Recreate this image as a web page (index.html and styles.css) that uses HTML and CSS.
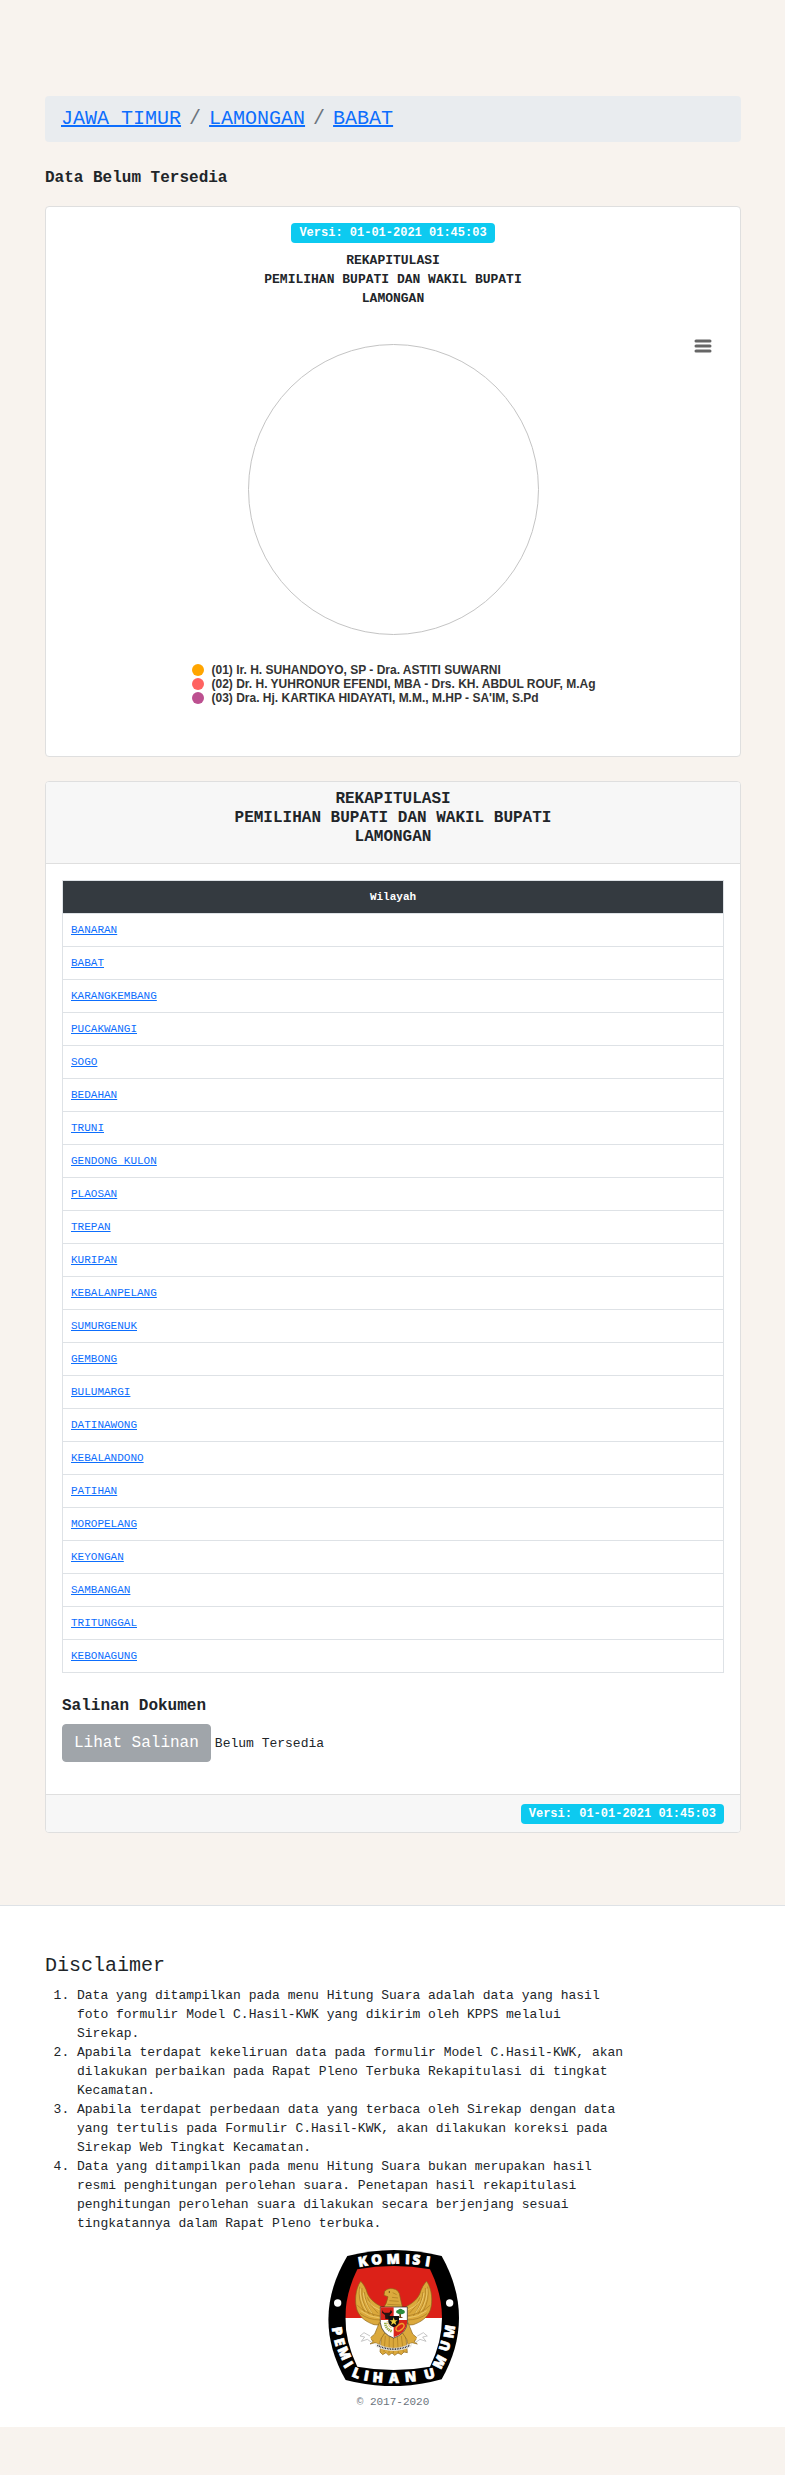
FILE: index.html
```html
<!DOCTYPE html>
<html lang="id">
<head>
<meta charset="utf-8">
<meta name="viewport" content="width=device-width, initial-scale=1">
<title>Rekapitulasi Lamongan</title>
<link rel="stylesheet" href="styles.css">
</head>
<body>
<main class="container">
  <nav aria-label="breadcrumb">
    <ol class="breadcrumb">
      <li><a href="#">JAWA TIMUR</a></li>
      <li><a href="#">LAMONGAN</a></li>
      <li><a href="#">BABAT</a></li>
    </ol>
  </nav>
  <h1 class="status">Data Belum Tersedia</h1>

  <section class="card card-chart">
    <span class="badge">Versi: 01-01-2021 01:45:03</span>
    <h2 class="chart-title">REKAPITULASI<br>PEMILIHAN BUPATI DAN WAKIL BUPATI<br>LAMONGAN</h2>
    <div class="chart">
      <button class="chart-menu" type="button" aria-label="Menu grafik">
        <svg width="18" height="14" viewBox="0 0 18 14"><path d="M2 2H16M2 7H16M2 12H16" stroke="#666" stroke-width="3" stroke-linecap="round"/></svg>
      </button>
      <div class="pie"></div>
      <ul class="legend">
        <li><span class="dot dot-1"></span>(01) Ir. H. SUHANDOYO, SP - Dra. ASTITI SUWARNI</li>
        <li><span class="dot dot-2"></span>(02) Dr. H. YUHRONUR EFENDI, MBA - Drs. KH. ABDUL ROUF, M.Ag</li>
        <li><span class="dot dot-3"></span>(03) Dra. Hj. KARTIKA HIDAYATI, M.M., M.HP - SA'IM, S.Pd</li>
      </ul>
    </div>
  </section>

  <section class="card">
    <header class="card-header">
      <h2>REKAPITULASI<br>PEMILIHAN BUPATI DAN WAKIL BUPATI<br>LAMONGAN</h2>
    </header>
    <div class="card-body">
      <table class="regions">
        <thead><tr><th scope="col">Wilayah</th></tr></thead>
        <tbody>
          <tr><td><a href="#">BANARAN</a></td></tr>
          <tr><td><a href="#">BABAT</a></td></tr>
          <tr><td><a href="#">KARANGKEMBANG</a></td></tr>
          <tr><td><a href="#">PUCAKWANGI</a></td></tr>
          <tr><td><a href="#">SOGO</a></td></tr>
          <tr><td><a href="#">BEDAHAN</a></td></tr>
          <tr><td><a href="#">TRUNI</a></td></tr>
          <tr><td><a href="#">GENDONG KULON</a></td></tr>
          <tr><td><a href="#">PLAOSAN</a></td></tr>
          <tr><td><a href="#">TREPAN</a></td></tr>
          <tr><td><a href="#">KURIPAN</a></td></tr>
          <tr><td><a href="#">KEBALANPELANG</a></td></tr>
          <tr><td><a href="#">SUMURGENUK</a></td></tr>
          <tr><td><a href="#">GEMBONG</a></td></tr>
          <tr><td><a href="#">BULUMARGI</a></td></tr>
          <tr><td><a href="#">DATINAWONG</a></td></tr>
          <tr><td><a href="#">KEBALANDONO</a></td></tr>
          <tr><td><a href="#">PATIHAN</a></td></tr>
          <tr><td><a href="#">MOROPELANG</a></td></tr>
          <tr><td><a href="#">KEYONGAN</a></td></tr>
          <tr><td><a href="#">SAMBANGAN</a></td></tr>
          <tr><td><a href="#">TRITUNGGAL</a></td></tr>
          <tr><td><a href="#">KEBONAGUNG</a></td></tr>
        </tbody>
      </table>
      <h3 class="copy-title">Salinan Dokumen</h3>
      <div class="copy-row">
        <button class="btn" type="button" disabled>Lihat Salinan</button>
        <span>Belum Tersedia</span>
      </div>
    </div>
    <footer class="card-footer"><span class="badge">Versi: 01-01-2021 01:45:03</span></footer>
  </section>
</main>

<footer class="page-footer">
  <div class="container">
    <h2 class="disclaimer-title">Disclaimer</h2>
    <ol class="disclaimer">
      <li>Data yang ditampilkan pada menu Hitung Suara adalah data yang hasil foto formulir Model C.Hasil-KWK yang dikirim oleh KPPS melalui Sirekap.</li>
      <li>Apabila terdapat kekeliruan data pada formulir Model C.Hasil-KWK, akan dilakukan perbaikan pada Rapat Pleno Terbuka Rekapitulasi di tingkat Kecamatan.</li>
      <li>Apabila terdapat perbedaan data yang terbaca oleh Sirekap dengan data yang tertulis pada Formulir C.Hasil-KWK, akan dilakukan koreksi pada Sirekap Web Tingkat Kecamatan.</li>
      <li>Data yang ditampilkan pada menu Hitung Suara bukan merupakan hasil resmi penghitungan perolehan suara. Penetapan hasil rekapitulasi penghitungan perolehan suara dilakukan secara berjenjang sesuai tingkatannya dalam Rapat Pleno terbuka.</li>
    </ol>
    <div class="brand">
      <svg class="logo" width="131" height="136" viewBox="52 60 393 408" role="img" aria-label="Komisi Pemilihan Umum">
        <defs>
          <clipPath id="inner"><path d="M140 118Q249 98 358 118Q430 264 358 410Q249 430 140 410Q68 264 140 118Z"/></clipPath>
          <g id="wing">
            <path d="M150 154C134 176 131 214 139 240C148 264 168 276 190 284L212 286V230C188 218 176 204 170 190C166 174 158 162 150 154Z" fill="#dba93c" stroke="#8d6316" stroke-width="2"/>
            <path d="M147 170Q140 210 162 246M154 174Q150 214 176 252M161 186Q164 222 190 258M170 202Q178 228 202 250M140 226Q164 250 208 258M148 250Q172 270 210 270" fill="none" stroke="#a87820" stroke-width="2"/>
            <path d="M149 176Q146 208 168 244M158 188Q160 216 184 250M172 214Q184 232 208 240M150 242Q176 262 208 264" fill="none" stroke="#f5d780" stroke-width="2"/>
            <path d="M206 278L192 312L176 326L188 333L178 342L194 338L206 344L210 328L228 300Z" fill="#dba93c" stroke="#8d6316" stroke-width="2"/>
            <path d="M178 318L160 308L148 318L162 321L152 334L170 328L184 338" fill="#fff" stroke="#aaa" stroke-width="2"/>
          </g>
        </defs>
        <path d="M110 78Q250 42 393 78Q497 264 393 448Q250 488 105 450Q-1 264 110 78Z" fill="#000"/>
        <g clip-path="url(#inner)">
          <path d="M90 90H410V264H90Z" fill="#dc2118"/>
          <path d="M90 264H410V440H90Z" fill="#fff"/>
        </g>
        <circle cx="81" cy="219" r="11" fill="#fff"/>
        <circle cx="417" cy="219" r="11" fill="#fff"/>
        <path d="M214 300L208 366L216 374L226 368L234 376L244 369L252 376L262 369L272 374L280 366L290 368L284 300Z" fill="#dba93c" stroke="#8d6316" stroke-width="2"/>
        <path d="M224 318L220 366M236 318L235 370M248 318V370M260 318L263 370M272 318L278 366" stroke="#a87820" stroke-width="2"/>
        <use href="#wing"/>
        <use href="#wing" transform="matrix(-1 0 0 1 498 0)"/>
        <path d="M232 200L220 196L222 184Q230 174 246 176Q266 178 268 200L276 236H216Q228 224 232 200Z" fill="#dba93c" stroke="#8d6316" stroke-width="2"/>
        <path d="M246 188L258 194M244 202L262 204M236 212L264 214M230 223L270 225" stroke="#a87820" stroke-width="2"/>
        <circle cx="236" cy="186" r="2" fill="#4c3209"/>
        <path d="M209 231H290V278Q286 312 249 324Q213 312 209 278Z" fill="#fff" stroke="#222" stroke-width="2"/>
        <path d="M210 232H249V270H210ZM249 270H289V280Q285 311 249 322Z" fill="#d9241b"/>
        <path d="M216 239Q216 250 228 248Q240 250 240 239L245 246L238 254L234 267H224L223 255L214 248Z" fill="#241413"/>
        <path d="M266 248H271V260L278 264H258L266 260Z" fill="#704515"/>
        <path d="M257 248Q255 240 262 240Q269 233 276 239Q286 242 281 250Q270 256 257 248Z" fill="#2b8c3d"/>
        <path d="M224 278Q224 296 243 304" fill="none" stroke="#9aac45" stroke-width="8" stroke-dasharray="4 2"/>
        <path d="M230 274Q232 288 244 294" fill="none" stroke="#e3c766" stroke-width="5" stroke-dasharray="3 2"/>
        <ellipse cx="268" cy="292" rx="14" ry="8" transform="rotate(-40 268 292)" fill="none" stroke="#efa42c" stroke-width="4"/>
        <path d="M233 258H265V276Q262 287 249 292Q236 287 233 276Z" fill="#111"/>
        <path d="M249 262L252 271H261L254 276L257 285L249 280L241 285L244 276L237 271H246Z" fill="#f5d13d"/>
        <path d="M195 339Q248 369 303 339L301 350Q248 374 197 350Z" fill="#fff" stroke="#c7c0ad"/>
        <path d="M200 346Q248 369 298 346" fill="none" stroke="#333" stroke-width="5" stroke-dasharray="3 2"/>
        <text class="logo-top" x="145 183 228 283 304 342" y="111 105 102 102 103 107" rotate="-10 -7 -2 2 5 9">KOMISI</text>
        <text class="logo-bottom" x="63 70 80 97 121 158 185 235 284 330 345 390 412 427" y="293 329 358 406 438 450 455 458 456 450 450 420 367 327" rotate="80 75 66 58 22 10 5 0 -5 -10 -15 -62 -74 -80">PEMILIHAN UMUM</text>
      </svg>
      <small class="copyright">© 2017-2020</small>
    </div>
  </div>
</footer>
</body>
</html>
```
FILE: styles.css
```css
* { box-sizing: border-box; }

body {
  margin: 0;
  padding: 96px 0 48px;
  background: #f8f3ee;
  color: #212529;
  font: 13px/19px "Liberation Mono", monospace;
}

h1, h2, h3, ol, ul { margin: 0; padding: 0; }
h1, h2, h3 { font-size: 16px; line-height: 19px; }
a { color: #0d6efd; }

.container { padding: 0 44px 0 45px; }

.breadcrumb {
  display: flex;
  flex-wrap: wrap;
  padding: 8px 16px;
  border-radius: 4px;
  background: #e9ecef;
  font-size: 20px;
  line-height: 30px;
  list-style: none;
}
.breadcrumb li + li::before {
  content: "/";
  padding: 0 8px;
  color: #6c757d;
}

.status { margin: 27px 0 18px; }

.card {
  border: 1px solid #dfdfdf;
  border-radius: 4px;
  background: #fff;
  overflow: hidden;
}
.card + .card { margin-top: 24px; }

.card-chart {
  display: flex;
  flex-direction: column;
  align-items: center;
  padding: 16px 16px 51px;
}

.badge {
  padding: 0 8px;
  border-radius: 4px;
  background: #0dcaf0;
  color: #fff;
  font-size: 12px;
  font-weight: 700;
  line-height: 20px;
}

.chart-title {
  margin-top: 8px;
  font-size: 13px;
  text-align: center;
}

.chart {
  position: relative;
  display: flex;
  flex-direction: column;
  align-items: center;
  align-self: stretch;
  padding-top: 36px;
}
.chart-menu {
  position: absolute;
  top: 25px;
  right: 6px;
  display: flex;
  padding: 6px;
  border: 0;
  background: none;
}
.pie {
  width: 291px;
  aspect-ratio: 1;
  border: 1px solid #c4c4c4;
  border-radius: 50%;
}
.legend {
  margin-top: 28px;
  padding-left: 2px;
  color: #333;
  font: 700 12px/14px "Liberation Sans", sans-serif;
  list-style: none;
}
.legend li { display: flex; align-items: center; gap: 7px; }
.dot { width: 12px; height: 12px; border-radius: 50%; }
.dot-1 { background: #ffa500; }
.dot-2 { background: #ff6361; }
.dot-3 { background: #bc5090; }

.card-header {
  padding: 8px 16px 16px;
  border-bottom: 1px solid #dfdfdf;
  background: #f7f7f7;
  text-align: center;
}
.card-body { padding: 16px 16px 32px; }

.regions {
  width: 100%;
  border-collapse: collapse;
  font-size: 11px;
  line-height: 16px;
}
.regions th, .regions td {
  padding: 8px;
  border: 1px solid #dee2e6;
}
.regions th { background: #343a40; color: #fff; }

.copy-title { margin: 24px 0 8px; }
.copy-row { display: flex; align-items: center; gap: 4px; }
.btn {
  padding: 6px 11px;
  border: 1px solid #a0a5aa;
  border-radius: 4px;
  background: #a0a5aa;
  color: #fff;
  font: 16px/24px "Liberation Mono", monospace;
}

.card-footer {
  display: flex;
  justify-content: flex-end;
  align-items: center;
  min-height: 38px;
  padding: 8px 16px;
  border-top: 1px solid #dfdfdf;
  background: #f7f7f7;
}

.page-footer {
  margin-top: 72px;
  padding: 48px 0 15px;
  border-top: 1px solid #dee2e6;
  background: #fff;
}
.disclaimer-title {
  margin-bottom: 8px;
  font-size: 20px;
  font-weight: 400;
  line-height: 24px;
}
.disclaimer { width: 84%; padding-left: 32px; }

.brand {
  display: flex;
  flex-direction: column;
  align-items: center;
  gap: 7px;
  margin-top: 17px;
}
.logo-top, .logo-bottom {
  fill: #fff;
  stroke: #fff;
  stroke-width: 2px;
  font-family: "Open Sans", sans-serif;
  font-size: 41px;
  font-weight: 800;
}
.copyright { color: #6c757d; font-size: 11px; }
```
